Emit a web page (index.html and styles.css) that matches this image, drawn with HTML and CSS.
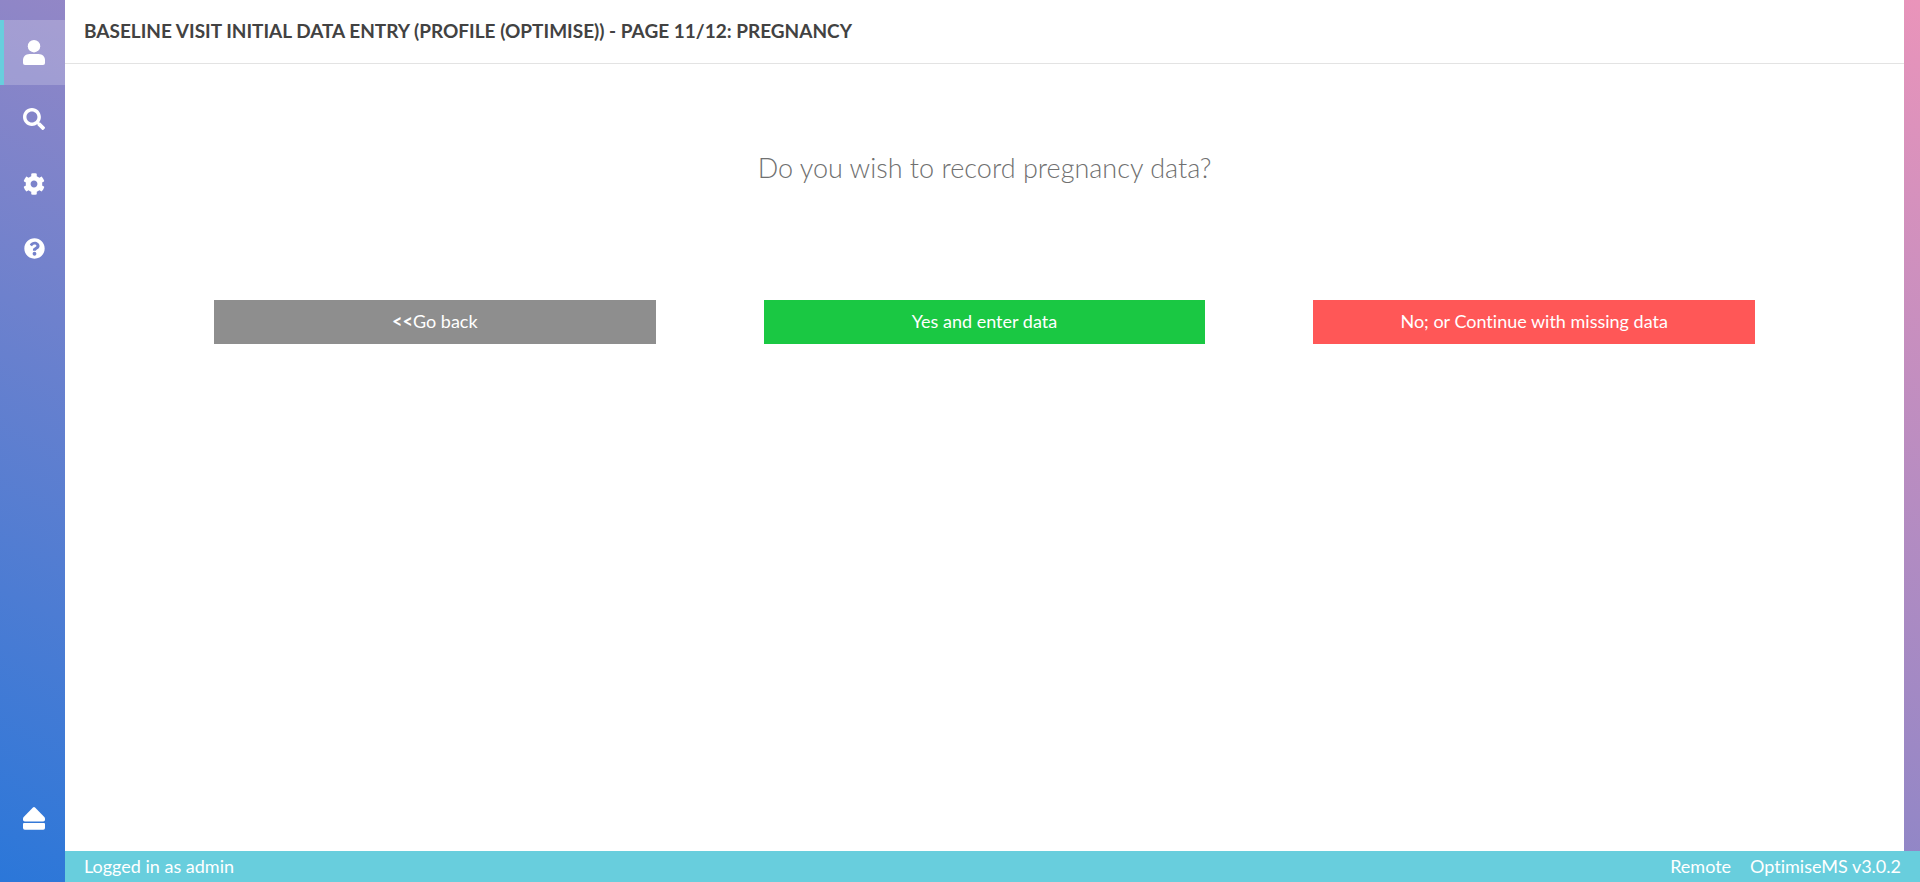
FILE: index.html
```html
<!DOCTYPE html>
<html lang="en">
<head>
<meta charset="utf-8">
<title>OptimiseMS</title>
<link rel="stylesheet" href="styles.css">
</head>
<body>
<div class="app">
  <nav class="sidebar" aria-label="Main menu">
    <a class="item active" href="#patient" aria-label="Patient">
      <svg class="icon" viewBox="0 0 22 27" width="22" height="27"><circle cx="11" cy="6.2" r="6.2"/><path d="M6.500 14H15.500C19.500 14 22 16.800 22 20.300V23Q22 25 20 25H2Q0 25 0 23V20.300C0 16.800 2.500 14 6.500 14Z"/></svg>
    </a>
    <a class="item" href="#search" aria-label="Search">
      <svg class="icon" viewBox="0 0 512 512" width="22" height="22"><path d="M505 442.700L405.300 343c-4.500-4.500-10.600-7-17-7H372c27.600-35.300 44-79.700 44-128C416 93.100 322.900 0 208 0S0 93.100 0 208s93.100 208 208 208c48.300 0 92.700-16.400 128-44v16.300c0 6.400 2.500 12.500 7 17l99.700 99.700c9.400 9.400 24.600 9.400 33.900 0l28.300-28.300c9.400-9.400 9.400-24.600.1-34zM208 336c-70.700 0-128-57.200-128-128 0-70.700 57.200-128 128-128 70.700 0 128 57.200 128 128 0 70.700-57.200 128-128 128z"/></svg>
    </a>
    <a class="item" href="#settings" aria-label="Settings">
      <svg class="icon" viewBox="0 0 512 512" width="22" height="22"><path d="M487.400 315.700l-42.600-24.600c4.300-23.200 4.300-47 0-70.200l42.600-24.600c4.900-2.800 7.100-8.600 5.500-14-11.100-35.600-30-67.800-54.700-94.600-3.800-4.100-10-5.100-14.800-2.300L380.800 110c-17.900-15.400-38.500-27.300-60.800-35.100V25.800c0-5.600-3.900-10.500-9.400-11.700-36.700-8.200-74.300-7.800-109.200 0-5.500 1.200-9.400 6.100-9.400 11.700V75c-22.200 7.900-42.800 19.800-60.800 35.100L88.700 85.500c-4.900-2.800-11-1.900-14.800 2.300-24.700 26.700-43.600 58.900-54.700 94.600-1.700 5.400.6 11.200 5.500 14L67.300 221c-4.300 23.200-4.300 47 0 70.200l-42.600 24.600c-4.900 2.800-7.100 8.600-5.500 14 11.100 35.600 30 67.800 54.700 94.600 3.800 4.100 10 5.100 14.800 2.300l42.600-24.600c17.900 15.400 38.500 27.300 60.800 35.100v49.200c0 5.600 3.900 10.500 9.400 11.700 36.700 8.200 74.300 7.800 109.200 0 5.500-1.200 9.400-6.100 9.400-11.700v-49.200c22.200-7.900 42.800-19.800 60.800-35.100l42.600 24.600c4.900 2.800 11 1.900 14.800-2.300 24.700-26.700 43.600-58.900 54.700-94.600 1.500-5.500-.7-11.300-5.600-14.100zM256 336c-44.100 0-80-35.900-80-80s35.900-80 80-80 80 35.900 80 80-35.900 80-80 80z"/></svg>
    </a>
    <a class="item" href="#help" aria-label="Help">
      <svg class="icon" viewBox="0 0 512 512" width="21" height="21"><path d="M504 256c0 136.997-111.043 248-248 248S8 392.997 8 256C8 119.083 119.043 8 256 8s248 111.083 248 248zM262.655 90c-54.497 0-89.255 22.957-116.549 63.758-3.536 5.286-2.353 12.415 2.715 16.258l34.699 26.310c5.205 3.947 12.621 3.008 16.665-2.122 17.864-22.658 30.113-35.797 57.303-35.797 20.429 0 45.698 13.148 45.698 32.958 0 14.976-12.363 22.667-32.534 33.976C247.128 238.528 216 254.941 216 296v4c0 6.627 5.373 12 12 12h56c6.627 0 12-5.373 12-12v-1.333c0-28.462 83.186-29.647 83.186-106.667 0-58.002-60.165-102-116.531-102zM256 338c-25.365 0-46 20.635-46 46 0 25.364 20.635 46 46 46s46-20.636 46-46c0-25.365-20.635-46-46-46z"/></svg>
    </a>
    <a class="item logout" href="#logout" aria-label="Log out">
      <svg class="icon" viewBox="0 0 22 23" width="22" height="23"><path d="M9.700.7Q11-.5 12.300.7L21.300 9.900Q22 10.700 22 11.500V12.700Q22 14.500 20.200 14.500H1.800Q0 14.500 0 12.700V11.500Q0 10.700.7 9.900Z"/><path d="M1 16H21Q22 16 22 17V21Q22 22.800 20.200 22.800H1.800Q0 22.800 0 21V17Q0 16 1 16Z"/></svg>
    </a>
  </nav>
  <div class="content">
    <main class="page">
      <header class="page-header">
        <h1 class="title">BASELINE VISIT INITIAL DATA ENTRY (PROFILE (OPTIMISE)) - PAGE 11/12: PREGNANCY</h1>
      </header>
      <section class="prompt">
        <p class="question">Do you wish to record pregnancy data?</p>
        <div class="actions">
          <button class="btn back" type="button"><b>&lt;&lt;</b>Go back</button>
          <button class="btn yes" type="button">Yes and enter data</button>
          <button class="btn no" type="button">No; or Continue with missing data</button>
        </div>
      </section>
    </main>
    <footer class="status">
      <span>Logged in as admin</span>
      <span class="push">Remote</span>
      <span>OptimiseMS v3.0.2</span>
    </footer>
  </div>
</div>
</body>
</html>
```
FILE: styles.css
```css
* {
  box-sizing: border-box;
}

body {
  margin: 0;
  font-family: "Century Gothic", Lato, sans-serif;
  font-size: 18px;
  font-variant-ligatures: none;
  color: #424242;
}

.app {
  display: flex;
  min-height: 100vh;
  background: linear-gradient(to top right, #2b77d9, #8f86c7 50%, #ea94ba);
}

.sidebar {
  display: flex;
  flex-direction: column;
  width: 65px;
  padding: 20px 0 32px;
}

.item {
  display: flex;
  align-items: center;
  justify-content: center;
  height: 65px;
  padding: 2px 1px 0 0;
  border-left: 4px solid transparent;
}

.active {
  border-left-color: #68cedd;
  background: rgba(255, 255, 255, 0.2) padding-box;
}

.logout {
  margin-top: auto;
}

.icon {
  fill: #fff;
}

.content {
  display: flex;
  flex: 1;
  flex-direction: column;
}

.page {
  flex: 1;
  margin-right: 16px;
  background: #fff;
}

.page-header {
  padding: 19px 19px 20px;
  border-bottom: 1px solid #e3e3e3;
}

.title {
  margin: 0;
  font-size: 19px;
  font-weight: 700;
  line-height: 24px;
}

.prompt {
  padding: 88px 149px;
}

.question {
  margin: 0 0 116px;
  font-size: 27px;
  line-height: 32px;
  text-align: center;
  font-weight: 300;
  color: #707070;
}

.actions {
  display: grid;
  grid-template-columns: repeat(3, 1fr);
  gap: 108px;
}

.btn {
  padding: 10px 16px 12px;
  border: 0;
  font-family: inherit;
  font-size: 18px;
  font-variant-ligatures: none;
  line-height: 22px;
  color: #fff;
  cursor: pointer;
}

.back {
  background: #8e8e8e;
}

.yes {
  background: #1ac843;
}

.no {
  background: #ff5757;
}

.status {
  display: flex;
  gap: 19px;
  padding: 4px 19px 5px;
  line-height: 22px;
  color: #fff;
  background: #68cedd;
}

.push {
  margin-left: auto;
}
```
